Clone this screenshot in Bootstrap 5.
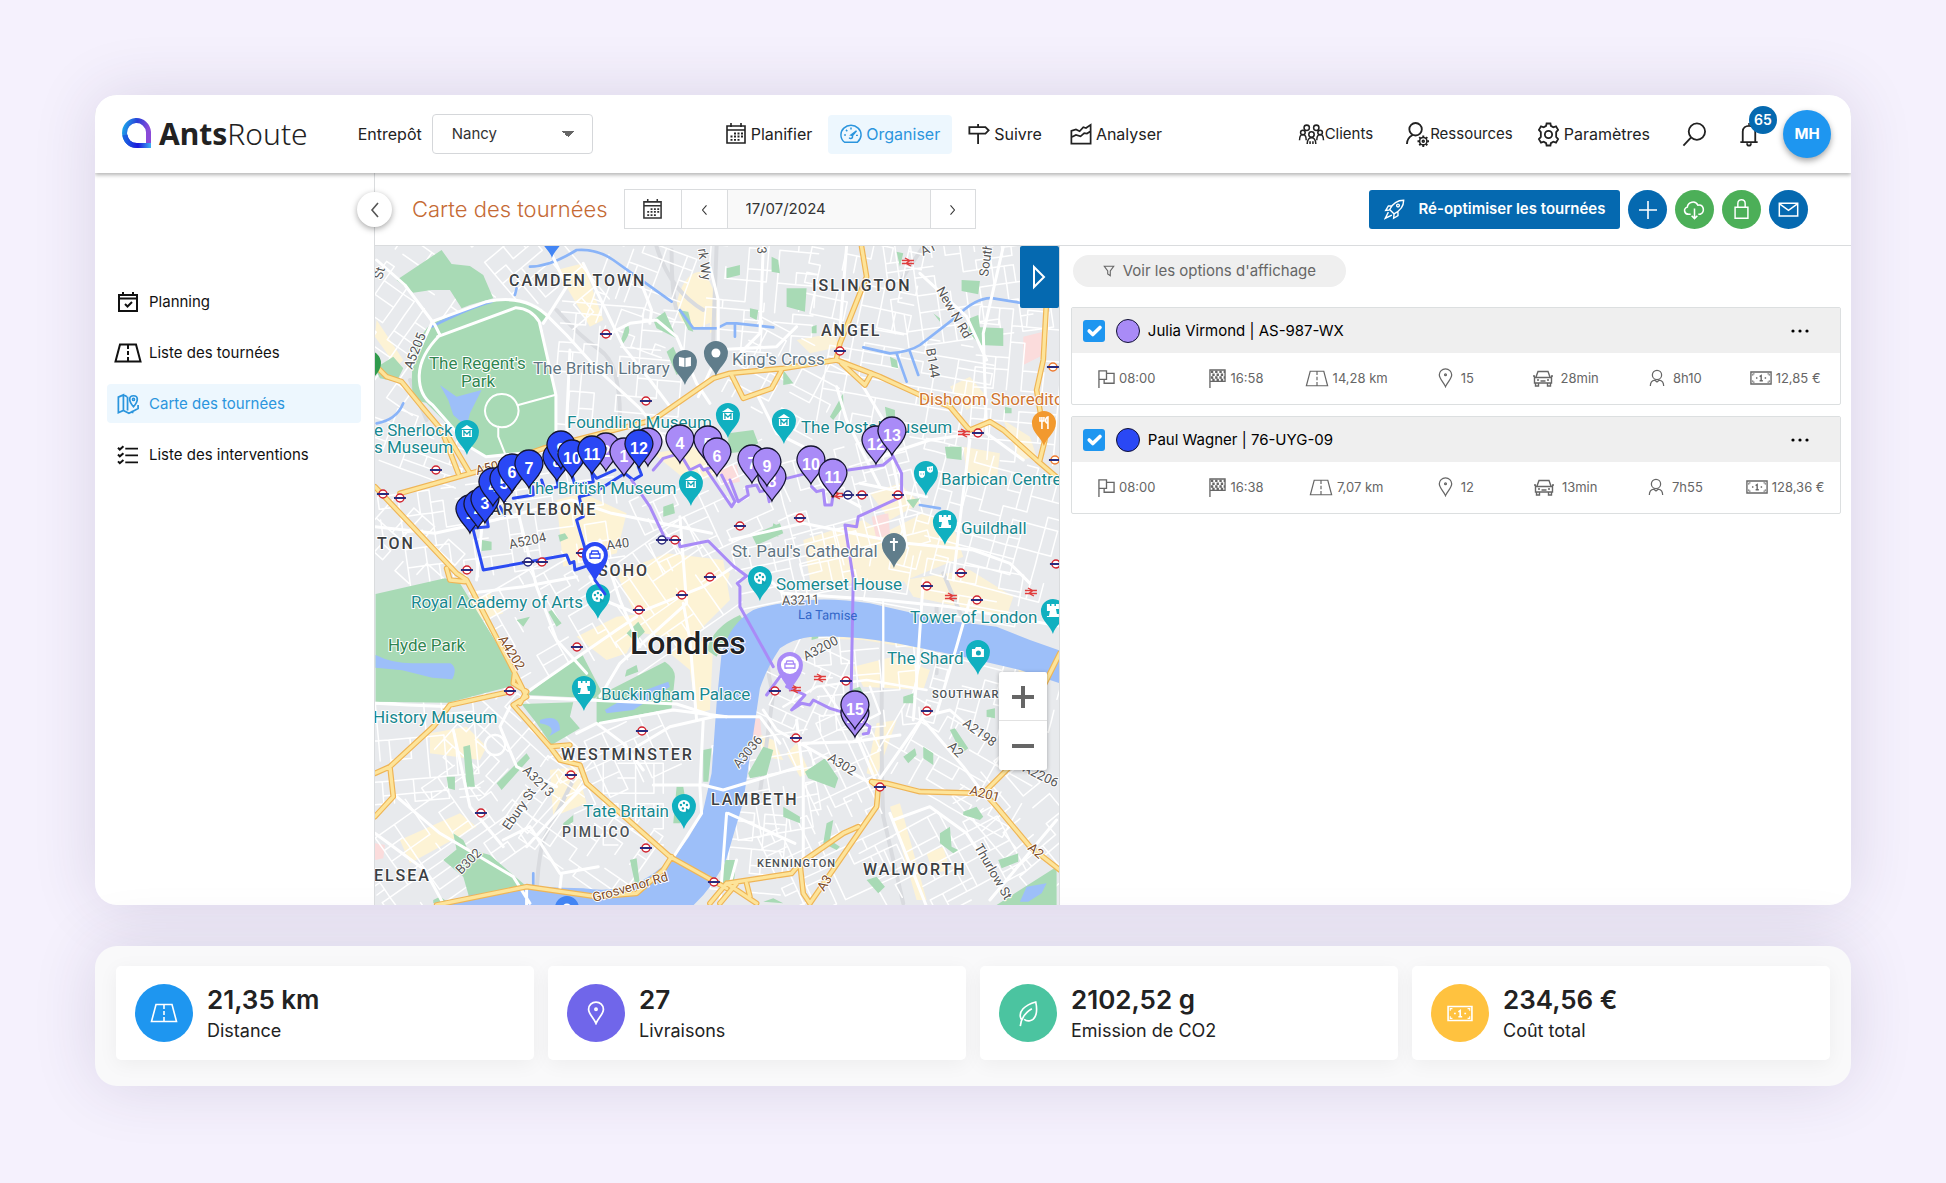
<!DOCTYPE html>
<html lang="fr">
<head>
<meta charset="utf-8">
<meta name="viewport" content="width=device-width, initial-scale=1">
<title>AntsRoute – Carte des tournées</title>
<link href="https://cdn.jsdelivr.net/npm/bootstrap@5.3.0/dist/css/bootstrap.min.css" rel="stylesheet">
<style>
:root{--blue:#0569b0;--sky:#1e96f0;--line:#dadcde}
body{background:#f5f1fd;font-family:Inter,"Open Sans",sans-serif;font-size:15px;line-height:20px;color:#222;padding:95px}
svg.ic{fill:none;stroke:currentColor;stroke-width:1.6;flex:none}
.app-window{background:#fff;border-radius:22px;overflow:hidden}
.app-shell{border-radius:22px;box-shadow:0 0 64px rgba(60,45,90,.14)}
.topbar{height:78px;padding:0 20px 0 27px;box-shadow:0 2px 4px rgba(0,0,0,.3);position:relative;z-index:3;background:#fff}
.brand{font-family:"Noto Sans","Open Sans",sans-serif;font-size:30px;line-height:36px;color:#222;font-weight:300}
.brand b{font-weight:700}
.depot{margin-left:50px;font-size:16px;gap:10px}
.depot select{width:161px;height:40px;border-color:#d5d7da;font-size:15px;padding-left:19px;border-radius:4px;color:#333;
 background-image:linear-gradient(45deg,transparent 50%,#666 50%),linear-gradient(-45deg,transparent 50%,#666 50%);background-size:6px 6px,6px 6px;background-position:right 24px center,right 18px center}
.mainnav{margin-left:120px;font-size:16px}
.mainnav .nav-link{padding:0 12px;height:39px;color:#222;border-radius:4px}
.mainnav .nav-link.on,.side .on{background:#edf7fe;color:#2b95dd}
.tools a{color:#222;text-decoration:none}
.count{position:absolute;left:10px;top:-16px;width:28px;height:28px;background:var(--blue);font-weight:600;font-size:14px}
.avatar{width:48px;height:48px;background:var(--sky);font-weight:700;font-size:15px;box-shadow:0 3px 6px rgba(0,0,0,.35)}
.side{flex:0 0 280px;padding:109px 13px 0 12px;border-right:1px solid var(--line)}
.side nav{row-gap:12px}
.side a{height:39px;padding:0 10px;gap:10px;border-radius:4px;color:#111;text-decoration:none}
.side svg{width:22px}
.toggle{position:absolute;left:-18px;top:19px;width:35px;height:35px;background:#fff;box-shadow:0 2px 6px rgba(0,0,0,.35);z-index:4;border:0;color:#555}
.toolbar{height:73px;border-bottom:1px solid var(--line);padding:0 43px 0 37px}
.toolbar h1{font-size:22px;line-height:28px;color:#c56a35;font-weight:300}
.dates{height:40px}
.dates button{width:46px;background:#fff;border:1px solid var(--line);color:#333;padding:0}
.dates button:first-child{width:58px}
.dates input{width:202px;border:1px solid var(--line);border-width:1px 0;background:#f9f9f9;padding:0 18px;font-size:15px;border-radius:0;color:#333}
.reopt{height:39px;width:251px;background:var(--blue);color:#fff;font-weight:600;font-size:15px;border-radius:3px;border:0;padding:0;gap:14px}
.round{width:39px;height:39px;border:0;color:#fff;padding:0}
.bg-deep{background:var(--blue)}.bg-leaf{background:#4caf58}
.mapbox{flex:0 0 46.4%;min-height:659px;position:relative;overflow:hidden;background:#e8eaed;border-right:1px solid var(--line)}
.mapbox>svg{position:absolute;inset:0;width:100%;height:100%}
.expand{position:absolute;right:0;top:0;width:39px;height:62px;background:var(--blue);color:#fff;border:0;border-radius:2px;padding:0}
.zoomer{position:absolute;right:12px;bottom:135px;width:48px;background:#fff;box-shadow:0 1px 4px rgba(0,0,0,.3);border-radius:2px}
.zoomer button{height:49px;border:0;background:none;color:#666;padding:0}
.zoomer button+button{box-shadow:0 -1px 0 #e2e2e2}
.filter{height:32px;width:273px;background:#efefef;border:0;color:#666;font-size:15px;margin:9px 0 20px 2px}
.panel{padding:0 10px 0 11px}
.tour{border:1px solid #dcdfe0;height:98px;margin-bottom:11px;border-radius:2px}
.tour-head{background:#efefef;height:45px;padding:0 24px 0 11px;color:#000}
.tour-head .form-check-input{width:22px;height:22px;margin:0 11px 0 0;border-radius:3px;border:0;float:none}
.tour-head .form-check-input:checked{background-color:var(--sky);background-size:24px}
.dot{width:24px;height:24px;border:1px solid #113}
.lilac{background:#a98bf7}.royal{background:#2a48f5}
.figures{color:#666;font-size:13px;height:50px}
.figures svg{stroke-width:1.4}
.more{border:0;background:none;padding:0;color:#000}
.totals{margin-top:41px;column-gap:14px;background:#f9f9fa;border-radius:22px;padding:20px 21px 26px;box-shadow:0 0 64px rgba(60,45,90,.14)}
.totals .tile{background:#fff;height:94px;border-radius:5px;padding:0 19px;box-shadow:0 4px 20px rgba(0,0,0,.05);gap:14px}
.disc{width:58px;height:58px;color:#fff}
.sky{background:#1e96f0}.violet{background:#7066ea}.mint{background:#4bc4a0}.amber{background:#ffc23f}
.tile>div{padding-top:4px}
.tile b{font-size:26px;line-height:32px;font-weight:600}
.tile span.what{font-size:18px;line-height:30px}
/* map lettering */
.lb{font-family:Roboto,sans-serif;paint-order:stroke;stroke:#fff;stroke-width:2px;stroke-linejoin:round;font-size:17px}
.t-poi{fill:#17888f}.t-park{fill:#2f8550}.t-grey{fill:#5f7583}.t-food{fill:#cf7430}
.t-area{fill:#3c4043;font-weight:500;font-size:16px;letter-spacing:2px}
.t-small{fill:#4c5155;font-weight:500;font-size:11px;letter-spacing:1px}
.t-mid{fill:#4c5155;font-size:14px;font-weight:500;letter-spacing:2px}
.t-road{fill:#555;font-size:13px}.t-main{fill:#7d4a24;font-size:13px}
.t-water{fill:#3367c8;font-size:13px;stroke:none}
.t-city{fill:#202124;font-size:32px;font-weight:500}
.num{font-family:"Liberation Sans",sans-serif;font-weight:700;font-size:16px;fill:#fff;text-anchor:middle}
</style>
</head>
<body>
<svg width="0" height="0" class="position-absolute" aria-hidden="true">
 <symbol id="cal" viewBox="0 0 22 22"><path d="M2 3h18v17H2zM2 7h18M6 0v4M16 0v4"/><path stroke-dasharray="2 1.500" d="M9 10.500h9M5.500 13.500h12.500M5.500 16.800h9" stroke-width="1.800"/></symbol>
 <symbol id="calcheck" viewBox="0 0 22 22"><path d="M2 4h18v16H2zM2 7.500h18M6 1v4M16 1v4M8 13l2.500 2.500L15 11" stroke-width="2"/></symbol>
 <symbol id="road" viewBox="0 0 28 20"><path d="M6 1.500h16l4.500 17h-25zM14 2v4M14 8v4M14 14v4"/></symbol>
 <symbol id="gauge" viewBox="0 0 24 24"><path d="M5 21C1 18 1 14 1 13a11 10.500 0 0 1 22 0c0 4-2 6-4 8zM10 16a2 2 0 1 0 2-3l6-4.500-5 6"/><path d="M4.500 13h2M6.500 7.500l1.500 1.500M12 5v2M17.500 13.500h2"/></symbol>
 <symbol id="sign" viewBox="0 0 24 24"><path d="M1.500 4.500H19l3.500 3.500L19 11.500H1.500zM11 1v3.500M11 11.500V23" stroke-width="2"/></symbol>
 <symbol id="chart" viewBox="0 0 24 24"><path d="M1.500 8l5-1.500 4 2 4-4.500 3 1L22.500 1.500v20.500h-21zM1.500 15l5-2.500 5 1.500 4-3.500 3 .5 4-2.500" stroke-width="1.900"/></symbol>
 <symbol id="group" viewBox="0 0 28 24"><circle cx="9" cy="5" r="2.800"/><circle cx="19" cy="5" r="2.800"/><circle cx="5" cy="10" r="2.400"/><circle cx="23" cy="10" r="2.400"/><circle cx="14" cy="12" r="2.800"/><path d="M1.500 18c0-8 7-8 7 0M19.500 18c0-8 7-8 7 0M9.500 22c0-9 9-9 9 0M12.500 22v-3M15.500 22v-3"/></symbol>
 <symbol id="usergear" viewBox="0 0 26 28"><circle cx="11" cy="8.500" r="6.500" stroke-width="1.900"/><path d="M2 24c0-6 3-8 6-9.500" stroke-width="1.900"/><circle cx="19" cy="21" r="3.800"/><circle cx="19" cy="21" r="1"/><path d="M19 15v2M19 25v2M13 21h2M23 21h2M14.800 16.800l1.500 1.500M21.700 23.700l1.500 1.500M23.200 16.800l-1.500 1.500M16.300 23.700l-1.500 1.500" stroke-width="2"/></symbol>
 <symbol id="gear" viewBox="0 0 24 26"><path d="M9.500 4L10 1.500h4L14.500 4l2.500 1.500L19.800 4.500l2.200 3.700L20 10.500v5l2 2.300-2.200 3.700L17 20.500 14.500 22l-.5 2.500h-4L9.500 22 7 20.500l-2.800 1L2 17.800l2-2.300v-5L2 8.200l2.200-3.700L7 5.500z" stroke-width="1.900"/><circle cx="12" cy="13" r="3.800" stroke-width="1.900"/></symbol>
 <symbol id="lens" viewBox="0 0 26 26"><circle cx="15.500" cy="10" r="8.500" stroke-width="1.900"/><path d="M9.500 16L1.500 24.500" stroke-width="1.900"/></symbol>
 <symbol id="bell" viewBox="0 0 20 26"><path d="M1 21h18M3.500 21V10c0-8 13-8 13 0v11M8 22c0 3.500 4 3.500 4 0" stroke-width="1.900"/><path d="M10 1v2"/></symbol>
 <symbol id="mapic" viewBox="0 0 24 24"><path d="M1.500 4.500L7 2v17l-5.500 2.500zM7 2l4 2M7 19l6 3 6-3 4-2v-4M11.500 4v15M18 15c-6-7-5-12 0-12s6 5 0 12zM17 19v3" stroke-width="1.900"/><circle cx="18" cy="7" r="1.200"/></symbol>
 <symbol id="checks" viewBox="0 0 24 22"><path d="M9 4h14M9 11.500h14M9 19h14" stroke-width="1.900"/><path d="M1 3l2 2 4-3.500M1 10.500l2 2L7 9M1 18l2 2 4-3.500" stroke-width="2.200"/></symbol>
 <symbol id="pinic" viewBox="0 0 16 22"><path d="M8 20.500C6 15.500 1.200 12 1.200 7.500a6.800 6.500 0 0 1 13.600 0C14.800 12 10 15.500 8 20.500z"/><circle cx="8" cy="7.500" r="1"/></symbol>
 <symbol id="flag" viewBox="0 0 18 20"><path d="M1 20V2h8v9H1M9 4.500h8V15H6.500v-4"/></symbol>
 <symbol id="finish" viewBox="0 0 18 20"><path d="M1 20V1h16v12H1"/><path d="M2 3h15M3.500 6H17M2 9h15M3.500 11.500H17" stroke-dasharray="2.500 2" stroke-width="2.600"/></symbol>
 <symbol id="car" viewBox="0 0 20 17"><path d="M3 7l2-5.500h10L17 7M1.500 7.500h17V13h-17zM2.500 13v3h3v-3M14.500 13v3h3v-3M0 6h2M18 6h2M4 10h2M14 10h2M7.500 11h5"/></symbol>
 <symbol id="man" viewBox="0 0 18 20"><circle cx="9" cy="6.500" r="5.200"/><path d="M1.500 19c0-4 2-6 5-6.500l2.500 2 2.500-2c3 .5 5 2.500 5 6.500"/></symbol>
 <symbol id="note" viewBox="0 0 24 15"><path d="M1 1h22v13H1z" stroke-width="1.500"/><path d="M3 5V3h2M19 3h2v2M21 10v2h-2M5 12H3v-2" stroke-width="1"/><path d="M10.500 6L12.200 4.800V10.500M10.500 10.500h3.500" stroke-width="1.500"/><path d="M6.500 7.500h1.600M16 7.500h1.600" stroke-width="1.600"/></symbol>
 <symbol id="leaf" viewBox="0 0 22 28"><path d="M4 20C0 12 8 5 19 2c2 9 1 18-6 19.500-3 .6-5-.5-6-1.500M3 27C4 19 8 13 15 9" stroke-width="1.700"/></symbol>
 <symbol id="rocket" viewBox="0 0 24 24"><path d="M22.500 1.500C16 1.500 10 5 6.500 12l5 5C18.500 13.500 22.500 8 22.500 1.500zM9 8H5l-3 5 4-.5M16 15v4l-5 3 .5-4.500M5 15l-3.500 7L9 18.500"/><circle cx="16" cy="7.500" r="1.600"/></symbol>
 <symbol id="cloud" viewBox="0 0 24 24"><path d="M8 17H6C1 17 0 11 4.500 9.500 5 4 13 2 15.500 7.500c6-1.500 8 7 2.500 9.500h-2M12 11v10M9 18.500l3 3 3-3"/></symbol>
 <symbol id="lock" viewBox="0 0 18 24"><path d="M2 10h14v12H2zM5 10V6c0-5.500 8-5.500 8 0v4"/></symbol>
 <symbol id="mail" viewBox="0 0 22 16"><path d="M1.200 1.200h19.600v13.600H1.200zM1.500 2l9.500 7 9.500-7"/></symbol>
 <symbol id="funnel" viewBox="0 0 14 14"><path d="M1.500 1.500h11L8.500 7v5.500l-3-2V7z" stroke-width="1.300"/></symbol>
 <symbol id="left" viewBox="0 0 10 18"><path d="M8 2L2 9l6 7"/></symbol>
 <symbol id="right" viewBox="0 0 10 18"><path d="M2 2l6 7-6 7"/></symbol>
</svg>

<main>
<div class="app-shell"><div class="app-window">
 <header class="topbar d-flex align-items-center">
  <div class="d-flex align-items-center brand">
   <svg width="29" height="34" viewBox="0 0 29 34" class="me-2"><defs><linearGradient id="lg" x1="0" y1="0" x2="1" y2=".3"><stop offset="0" stop-color="#1ba7ea"/><stop offset=".5" stop-color="#2b3fd8"/><stop offset="1" stop-color="#8a4ad8"/></linearGradient><linearGradient id="lg2" x1="0" x2="1"><stop offset="0" stop-color="#1b62e0"/><stop offset=".5" stop-color="#1c17dc"/><stop offset="1" stop-color="#3fb0f4"/></linearGradient></defs><path d="M26.500 28.500V15A12 12.500 0 1 0 15 28.500" fill="none" stroke="url(#lg)" stroke-width="5"/><path d="M3 18c1 7 6 10.500 12 10.500h14" fill="none" stroke="url(#lg2)" stroke-width="5"/></svg>
   <span><b>Ants</b>Route</span>
  </div>
  <div class="depot d-flex align-items-center"><label for="depot">Entrepôt</label>
   <select id="depot" class="form-select"><option>Nancy</option></select></div>
  <nav class="mainnav nav flex-nowrap gap-1">
   <a class="nav-link d-flex align-items-center gap-1" href="#"><svg class="ic" width="22" height="22"><use href="#cal"/></svg>Planifier</a>
   <a class="nav-link on d-flex align-items-center gap-1" href="#"><svg class="ic" width="22" height="22"><use href="#gauge"/></svg>Organiser</a>
   <a class="nav-link d-flex align-items-center gap-1" href="#"><svg class="ic" width="22" height="22"><use href="#sign"/></svg>Suivre</a>
   <a class="nav-link d-flex align-items-center gap-1" href="#"><svg class="ic" width="22" height="23"><use href="#chart"/></svg>Analyser</a>
  </nav>
  <div class="tools d-flex align-items-center ms-auto">
   <a class="d-flex align-items-center me-4" href="#"><svg class="ic" width="27" height="23"><use href="#group"/></svg>Clients</a>
   <a class="d-flex align-items-center ms-2 me-4" href="#"><svg class="ic" width="25" height="27"><use href="#usergear"/></svg>Ressources</a>
   <a class="d-flex align-items-center gap-1 me-4" href="#"><svg class="ic" width="23" height="25"><use href="#gear"/></svg><span class="fs-6">Paramètres</span></a>
   <a class="ms-2 me-4" href="#" aria-label="Rechercher"><svg class="ic" width="25" height="25"><use href="#lens"/></svg></a>
   <a class="position-relative ms-2 me-4" href="#" aria-label="Notifications"><svg class="ic" width="20" height="25"><use href="#bell"/></svg><span class="count rounded-circle text-white d-flex align-items-center justify-content-center">65</span></a>
   <span class="avatar rounded-circle text-white d-flex align-items-center justify-content-center">MH</span>
  </div>
 </header>

 <div class="d-flex">
  <aside class="side">
   <nav class="d-grid">
    <a class="d-flex align-items-center" href="#"><svg class="ic" height="22"><use href="#calcheck"/></svg>Planning</a>
    <a class="d-flex align-items-center" href="#"><svg class="ic overflow-visible" height="20" viewBox="3 0 22 20"><use href="#road" width="28" height="20" stroke-width="2"/></svg>Liste des tournées</a>
    <a class="on d-flex align-items-center" href="#"><svg class="ic" height="22"><use href="#mapic"/></svg>Carte des tournées</a>
    <a class="d-flex align-items-center" href="#"><svg class="ic" height="20"><use href="#checks"/></svg>Liste des interventions</a>
   </nav>
  </aside>

  <div class="flex-grow-1 position-relative">
   <button class="toggle rounded-circle d-flex align-items-center justify-content-center" aria-label="Replier"><svg class="ic" width="10" height="18"><use href="#left"/></svg></button>
   <div class="toolbar d-flex align-items-center">
    <h1 class="mb-0">Carte des tournées</h1>
    <div class="dates d-flex ms-3">
     <button aria-label="Calendrier"><svg class="ic" width="21" height="21"><use href="#cal"/></svg></button>
     <button class="border-start-0" aria-label="Jour précédent"><svg class="ic" width="7" height="12"><use href="#left"/></svg></button>
     <input type="text" value="17/07/2024" aria-label="Date">
     <button aria-label="Jour suivant"><svg class="ic" width="7" height="12"><use href="#right"/></svg></button>
    </div>
    <div class="d-flex gap-2 ms-auto">
     <button class="reopt d-flex align-items-center justify-content-center"><svg class="ic" width="21" height="21"><use href="#rocket"/></svg>Ré-optimiser les tournées</button>
     <button class="round bg-deep rounded-circle" aria-label="Ajouter"><svg class="ic" width="18" height="18" viewBox="0 0 18 18"><path d="M9 0v18M0 9h18"/></svg></button>
     <button class="round bg-leaf rounded-circle" aria-label="Télécharger"><svg class="ic" width="23" height="23"><use href="#cloud"/></svg></button>
     <button class="round bg-leaf rounded-circle" aria-label="Verrouiller"><svg class="ic" width="17" height="22"><use href="#lock"/></svg></button>
     <button class="round bg-deep rounded-circle" aria-label="Envoyer"><svg class="ic" width="21" height="15"><use href="#mail"/></svg></button>
    </div>
   </div>
   <div class="d-flex">
    <div class="mapbox">
     <svg viewBox="0 0 684 659" preserveAspectRatio="xMidYMid slice" role="img" aria-label="Carte de Londres">
      <g transform="translate(-5 -6) scale(.333333)" fill="none" stroke-linejoin="round" stroke-linecap="round">
       <g fill="#fdf3d5">
        <path d="M920 190Q940 100 990 95 1040 120 1040 240L975 268Q925 260 920 190zM560 90l80-20 60 170-40 20zM20 240l80 120-20 20-65-90zM1020 170l20 10-5 90-15 10zM560 780l80-20 130 60-30 120-160 40zM740 1000l150-60 170 20 20 120-120 120-140-20zM850 640l120-20 90 80-100 30zM1020 960l60 40-20 70-60-10z"/>
        <path d="M1280 300l110-20 20 40-90 20zM1300 900l180-60 60 40 120-60 90 40 30 90-220 90-240-20zM1500 760l90-30 60 60-90 50zM1600 1020l200-30 130 80-20 60-280-60zM1740 440l60-30 50 60-60 40zM1900 540l80 50 20 60-50 10zM1780 620l110 20-10 90-90-30zM1180 1130l120-20 200 30 190 40-30 50-180-30-280-10z" opacity=".9"/>
        <path d="M180 1480l110-20 60 60-20 40-150-20zM540 1590l80-10 30 110-100 40zM90 1800l180-80 50 40-200 110zM240 1100l120-40 40 60-100 30zM620 1190l120-60 90-10-60 120-60 20zM900 1240l70-40 60 10-10 200-40 10-20-130zM1250 1540l30-30 40 90-30 10zM1520 1450l60-10-60 170-30-10zM1560 1700l30-10 80 290h-30zM1450 1280l120-30 110 40-20 60-180-10zM1670 1840l50-20 20 70-50 10zM1060 1200l70-60 40 20-50 90zM1160 1480l50 20 30 60-60-10zM1880 1180l80 20-10 40-70-10zM1930 1240l40 10 30 80-40 10z"/>
       </g>
       <g fill="#fbdcdc"><path d="M1960 290l60-15v70l-60 30zM1505 830l50-10 5 60-40 20zM1105 1440l65-5 5 50-70 40zM15 1810l30 5-5 40-25 5zM1050 680l50-5 10 50-50 10z"/></g>
       <path d="M860 20q40 130 140 190M905 30q0 130 15 180M1040 20q-10 250-10 290M560 210q70 80 130 120t60 200M120 420l50 120M500 1990q0-110 20-190l60-120 30-60M1540 1090q-10 400 0 640l60 260M1230 1120q-60 120-20 240l-40 300M1700 1100q0 160 0 200M1660 20l-60 90M1720 1000l60 140 200 100" stroke="#d9dbdf" stroke-width="12"/>
       <path id="streets" stroke="#fff" stroke-width="4.500"/>
       <g fill="#a8dab5">
        <path d="M80 120L215 30l30 42 55 6 40 27 30 70-70 20-25 10-35-55h-55l-55 8z"/>
        <path d="M130 480q-20-160 55-230l165-65q120-25 185 40l-20 20-310 50q-90 130-30 195z"/>
        <path d="M205 290l235-87q45 5 70 42l50 220v165l-140 12-70 8-50-30-60-60-80-80q-20-80 0-120z"/>
        <path d="M15 385l55-35 30 35-20 40-50-10zM17 1062l208-47 45 15 160 260-5 48-190 50-218-3z"/>
        <path d="M470 1365l165-125 60 115-20 20zM455 1392l155-5-10 43 30 35-85 50-45-65zM680 1370l205-105q30 20 30 45l-10 95-225 45zM770 1180l35-35 20 30-30 30zM770 1290l30-15 5 20-40 15zM1000 1530l25-5-10 100h-15z"/>
        <path d="M220 1860l50-40 90 25 105 90-165 45-20-70zM250 1780l30 20 10 20-30 10zM280 1520l20-5 15 125h-25zM230 1610h25v40l-20-5zM380 1630l90-90 10 15-85 95zM580 1750l30-25v20l-30 20zM780 1860l20-5 10 80-15-5zM190 1980l20-10 30 20h-50zM920 1640h20l10 60-20 50h-20z"/>
        <path d="M850 240l35-25 35 80-60-30zM890 335l20-15 30 70-20 15zM750 310l20-60q20 20-10 60zM925 210l30 5 15 60-15-5zM545 1110l30 40-15 10-25-45zM335 900l30 5v25l-30 3zM440 1140l40-10-20 30zM565 885l20-5 10 15-25 10zM880 800l30-10 5 30-35 10z"/>
        <path d="M1250 145h60l-5 70-55-15zM1070 85l40-10v30l-40 10zM1205 50l20 10 5 40-25-5zM1775 120l55 3-5 40-50-10zM1800 235l25-10 5 37 70 3v53l-70-3-35-40zM1075 580l75-10 15 40-45 25-45 5zM1145 885l85-35 10 30-80 35zM1210 850l20 10-5 30-20-10zM1380 530l40-70v40l-30 40zM1545 500l30 10v30l-25-5zM1725 620h50v40l-45-5zM1560 350l20 10 5 25-20-5zM1690 220l20 15v10zM1140 205l25 5-5 30-20-10zM1325 260l15-5v25h-15zM1580 35l20 5-10 40zM1610 780l40-5-20 30zM1905 500l20 5v15h-20zM1240 390l30 40-30 5z"/>
        <path d="M1305 1595l60-40 40 60-10 30-80-30zM1135 1600l45-80 30 10-20 75-50 10zM1010 1230q20-70 100-105l10 15q-60 60-80 110zM1140 1300l30 20-10 30-30-20zM1325 1170l20-5v30l-20 5zM1600 1550l35-25 5 20-25 25zM1660 1520l30 20v35l-30-20zM1740 1470l15-5 40 60-20 15zM1600 1370l30-10v30h-30zM1110 1440h25v25h-25zM1240 1700l50 30v20l-50-20zM1370 1750l20-10-10 60 30 20-10 10-40-20zM1710 1780l30-20 5 60 20 10-15 10-40-30zM1780 1715l40-15 20 30-10 10-50-15zM1885 1860l60-20v25l-50 20zM1490 1920l30-10 25 30-20 20zM1880 1995l180-115v115zM1065 1860h30v40l-5 40-40-5zM1440 1350l30-10 10 20-30 15zM1850 1410l25-5v30l-25-5zM1180 1985l30-10 30 15z"/>
       </g>
       <g fill="#9dbff9">
        <path d="M210 435l50 35 75-20-35 70-10 40-40-35-15-45zM17 1245q50 25 110 25h115q22 15 5 48l-60-5-90-22-80-8zM510 1440q60-20 60 30l-35 20q30-30-25-40zM705 1410q60-40 190-85l5 15-110 70-80 10zM1950 1985l20-45 60-10-15 30-40 25z"/>
        <path d="M2080 1235l-100-35-100-40-160-20-220-50q-130-20-230-5-80 10-120 25-70 40-95 130l-15 150-15 210-25 110q-40 90-90 140-60 60-130 90-70 15-140 5l-170-5-170 25-90 40h750q70-60 110-150l50-170 25-170 25-170q20-60 60-120 40-30 100-35 120-5 250 20l200 40 170 40 180 60z"/>
       </g>
       <g stroke="#8ab4f8" stroke-width="8"><path d="M480 80q60 0 140-50 60-5 110 30l70 50 105 75M435 165l5-20M185 260q120-60 180-75M930 210l40 55 70 0 30-15h30l110 12M1480 322l80 18q60-5 90-25l110-85q60-60 110-55l120 20M1580 340l30 85M1620 335l25 70M1095 250v40M20 550q60-10 80-60M490 1900v40M1650 795l60 10"/></g>
       <g stroke="#fff" stroke-width="9">
        <path d="M20 60l85 75 90 120 15 30q-60 60-62 120-2 60 40 90l110 125 50 30 210-20v-165l-50-220q-25-40-70-42l-235 87M185 245l165-60q120-25 190 50l50 50 90 100 130 120 80 100M520 250l70-110-50-110M600 330l-10 220 10 140M125 380l60-130M640 70l120 250 80 100 60 80M720 280l60-30 80-10 60 50 60 140 40 60M810 120l35 90-5 40M1020 80l25 100v160l-60 130M1180 20l-10 260-60 60M1430 20l-20 250M1030 330l190-10 60-60M1650 100l140 130 60 130M1900 20l-60 260 10 300 110 80M1480 440l60 100 40 180 30 200M1500 660l180-60 140-20M1800 600l-30 240-20 180M1160 460l60 120 80 40 60 120 110 60M1080 900l220-50 200 40 110 20 200 20 110 40 60 60M1400 440l30 100 100 200"/>
        <path d="M395 462a50 50 0 1 0 1 0M445 495l110-30M385 560v30l20 50" stroke-width="6"/>
        <path d="M15 860l180 20 180-40 230-60 120 40 300 60M340 820l-20 200M440 800l60 240 60 160 90 100M690 900l60 180 60 140M930 830l20 260-200 180-60 100M300 1060l160-20 160-30M660 1010l40 70 100 40 200-80 90-60M940 1090l20 110 20 240M480 1350l260-180 60-40M470 1372l450 20 110 35M690 1450l220-40 160 20M1180 1000l60 60 300 20 200 20 340 60M1470 730l200 40"/>
        <path d="M620 1480l60-30 80 60 60 80M1030 1430l-130 30-100 60M1000 1440l-10 200 5 80-90 140M15 1390l100 5 130 5M420 1400l-30 60 50 120 120 60M250 1470l50 230 100 120M80 1670l130 110 220 130 50 80M400 1800l80-40 90 140M640 1640l-80 80-90 100M850 1635h150l60 15 230-70M1075 1720l200 90M1300 1510l150-5 140-20M1280 1440l20 170v260M1180 1410l40 60 300 170M1020 1430h150l60 80M1440 1440l80 190M1520 1630l140-200 80-20 100 90M1660 1440l120 140 60 80M1660 1020l-20 300-10 120M1800 1080l-40 140-60 200M1570 1740l110-40 110 80 90 140M1560 1720l110 280M1070 1720l-20 270M15 1780l150 110 60 110M2060 1740l-200 240M1100 1860l-30 110M470 1940v55M570 1945l5-45 110-20"/>
        <path d="M1500 1340l30 80-60 30M1240 1400l100-60 150-20 180 30M1540 1080v260M1360 1340l80 120M375 1485a30 30 0 1 0 1 0" stroke-width="7"/>
       </g>
       <g id="arterials"></g>
       <g stroke="#2b4bf2" stroke-width="9">
        <path d="M310 870l30 120 250-45 10 25 12-5 3 25 30-10M645 925l-25-85 20-10-12-60 42-10 95-60 25 20 25-15-10-25M305 865l50-5-5-30M390 800l15 25v-40M430 775l60-10-2-25M515 720l10 30 40-10-5-25M605 700l10 35 55-10-5-30 15 20 55-25"/>
       </g>
       <g stroke="#a98bf7" stroke-width="9">
        <path d="M785 720l55 80 45 95 40 5 5 20 85-17 75 75 40 30-28 22 8 10 0 60 100 180M1230 1310l-40 55M1250 1340l55 25-40 45 30-20 25 5 10-15 50 25 50 15M1485 1450l15 10-5 20-15 2M1565 640l30 60v70l-130 60-5 30-35-5 25 160-7 375M1570 650l-30 25-105 15M1250 715l60-15M1325 740l15 15 20-5 5 45h20l5-35M1010 690l75 110 10-15-40-80M1080 720l25 65 30-20-5-25 30-5 10 20 20-5 8 35M850 690l30-35 50-15 30 50 30-15 10 15 30-10"/>
       </g>
      </g>
      <g id="overlay"></g>
     </svg>
     <button class="expand" aria-label="Agrandir la carte"><svg class="ic" width="14" height="26" viewBox="0 0 14 26"><path d="M2 3l10 10L2 23z" stroke-width="2"/></svg></button>
     <div class="zoomer d-flex flex-column">
      <button aria-label="Zoom avant"><svg width="22" height="22"><path d="M9 0h4v9h9v4h-9v9H9v-9H0V9h9z" fill="#666"/></svg></button>
      <button aria-label="Zoom arrière"><svg width="22" height="22"><path d="M0 9h22v4H0z" fill="#666"/></svg></button>
     </div>
    </div>

    <section class="panel flex-grow-1">
     <button class="filter rounded-pill d-flex align-items-center justify-content-center gap-2"><svg class="ic" width="12" height="12"><use href="#funnel"/></svg>Voir les options d'affichage</button>
     <article class="tour">
      <div class="tour-head d-flex align-items-center">
       <input class="form-check-input" type="checkbox" id="t1" checked><span class="dot lilac rounded-circle me-2"></span><label for="t1">Julia Virmond | AS-987-WX</label>
       <button class="more ms-auto" aria-label="Plus"><svg width="30" height="8"><circle cx="7" cy="4" r="1.600"/><circle cx="14" cy="4" r="1.600"/><circle cx="21" cy="4" r="1.600"/></svg></button>
      </div>
      <div class="figures row g-0 align-items-center text-nowrap">
       <div class="col d-flex justify-content-center align-items-center gap-1"><svg class="ic" width="17" height="19"><use href="#flag"/></svg>08:00</div>
       <div class="col d-flex justify-content-center align-items-center gap-1"><svg class="ic" width="17" height="19"><use href="#finish"/></svg>16:58</div>
       <div class="col d-flex justify-content-center align-items-center gap-1"><svg class="ic" width="24" height="17"><use href="#road"/></svg>14,28 km</div>
       <div class="col d-flex justify-content-center align-items-center gap-2"><svg class="ic" width="15" height="20"><use href="#pinic"/></svg>15</div>
       <div class="col d-flex justify-content-center align-items-center gap-2"><svg class="ic" width="20" height="17"><use href="#car"/></svg>28min</div>
       <div class="col d-flex justify-content-center align-items-center gap-2"><svg class="ic" width="16" height="18"><use href="#man"/></svg>8h10</div>
       <div class="col d-flex justify-content-center align-items-center gap-1"><svg class="ic" width="22" height="14"><use href="#note"/></svg>12,85 €</div>
      </div>
     </article>
     <article class="tour">
      <div class="tour-head d-flex align-items-center">
       <input class="form-check-input" type="checkbox" id="t2" checked><span class="dot royal rounded-circle me-2"></span><label for="t2">Paul Wagner | 76-UYG-09</label>
       <button class="more ms-auto" aria-label="Plus"><svg width="30" height="8"><circle cx="7" cy="4" r="1.600"/><circle cx="14" cy="4" r="1.600"/><circle cx="21" cy="4" r="1.600"/></svg></button>
      </div>
      <div class="figures row g-0 align-items-center text-nowrap">
       <div class="col d-flex justify-content-center align-items-center gap-1"><svg class="ic" width="17" height="19"><use href="#flag"/></svg>08:00</div>
       <div class="col d-flex justify-content-center align-items-center gap-1"><svg class="ic" width="17" height="19"><use href="#finish"/></svg>16:38</div>
       <div class="col d-flex justify-content-center align-items-center gap-1"><svg class="ic" width="24" height="17"><use href="#road"/></svg>7,07 km</div>
       <div class="col d-flex justify-content-center align-items-center gap-2"><svg class="ic" width="15" height="20"><use href="#pinic"/></svg>12</div>
       <div class="col d-flex justify-content-center align-items-center gap-2"><svg class="ic" width="20" height="17"><use href="#car"/></svg>13min</div>
       <div class="col d-flex justify-content-center align-items-center gap-2"><svg class="ic" width="16" height="18"><use href="#man"/></svg>7h55</div>
       <div class="col d-flex justify-content-center align-items-center gap-1"><svg class="ic" width="22" height="14"><use href="#note"/></svg>128,36 €</div>
      </div>
     </article>
    </section>
   </div>
  </div>
 </div>
</div></div>

<section class="totals d-flex">
 <div class="tile w-100 d-flex align-items-center"><span class="disc sky rounded-circle d-flex align-items-center justify-content-center"><svg class="ic" width="28" height="20"><use href="#road"/></svg></span><div class="d-flex flex-column"><b>21,35 km</b><span class="what">Distance</span></div></div>
 <div class="tile w-100 d-flex align-items-center"><span class="disc violet rounded-circle d-flex align-items-center justify-content-center"><svg class="ic" width="18" height="24"><use href="#pinic"/></svg></span><div class="d-flex flex-column"><b>27</b><span class="what">Livraisons</span></div></div>
 <div class="tile w-100 d-flex align-items-center"><span class="disc mint rounded-circle d-flex align-items-center justify-content-center"><svg class="ic" width="22" height="27"><use href="#leaf"/></svg></span><div class="d-flex flex-column"><b>2102,52 g</b><span class="what">Emission de CO2</span></div></div>
 <div class="tile w-100 d-flex align-items-center"><span class="disc amber rounded-circle d-flex align-items-center justify-content-center"><svg class="ic" width="26" height="17"><use href="#note"/></svg></span><div class="d-flex flex-column"><b>234,56 €</b><span class="what">Coût total</span></div></div>
</section>
</main>

<script src="https://cdn.jsdelivr.net/npm/bootstrap@5.3.0/dist/js/bootstrap.bundle.min.js"></script>
<script>
// Minor streets: irregular grids, one per district [cx, cy, half width, half height, angle]
let seed=7;const rnd=()=>(seed=(seed*16807)%2147483647)/2147483647;
const districts=[[120,260,170,220,35],[480,80,260,120,50],[760,400,200,200,5],[820,170,140,160,20],[1180,180,170,200,5],[1500,120,190,150,12],[1800,150,240,200,-8],[1250,430,160,140,28],[1620,450,260,160,10],[1950,450,140,240,5],[130,640,160,110,20],[400,870,360,150,-8],[130,950,160,110,42],[1050,800,240,130,-25],[1450,800,200,180,-15],[1850,850,240,200,15],[540,1150,170,170,-30],[880,1080,190,170,-35],[1300,980,200,90,-12],[1750,1050,260,80,10],[150,1550,190,170,-5],[430,1550,190,150,42],[200,1820,230,170,-35],[760,1560,200,100,-25],[640,1780,220,130,35],[820,1700,120,130,0],[1250,1330,150,140,25],[1500,1330,160,150,-5],[1850,1380,220,140,15],[1200,1640,150,150,-10],[1430,1550,150,130,-25],[1750,1600,230,140,30],[1150,1850,120,130,5],[1400,1850,190,150,-25],[1750,1860,240,150,-28],[1980,1760,120,220,-40]];
let d='';
for(const [cx,cy,w,h,deg] of districts){
 const a=deg*Math.PI/180,c=Math.cos(a),s=Math.sin(a),xs=[],ys=[];
 for(let x=-w;x<w;x+=28+rnd()*44)xs.push(x);
 for(let y=-h;y<h;y+=24+rnd()*40)ys.push(y);
 const P=(x,y)=>Math.round(cx+x*c-y*s)+' '+Math.round(cy+x*s+y*c);
 xs.forEach((x,i)=>ys.forEach((y,j)=>{
  if(xs[i+1]!==undefined&&rnd()<.62)d+='M'+P(x,y)+'L'+P(xs[i+1],y);
  if(ys[j+1]!==undefined&&rnd()<.62)d+='M'+P(x,y)+'L'+P(x,ys[j+1]);
 }));
}
document.getElementById('streets').setAttribute('d',d);

// Arterial roads, casing first and fill on top
const art='M15 375l35 35 45 15 65 80 55 65 50 130M235 590l65 110M90 760l230-65 200-70 330-85 180-125 50-15 160-15 160-25 130 50 120 55 90 35 50 60 10 10 60-25 40 25 100 90 70 60M1475 20l15 90-80 200-10 45M1085 405l35 70 85-30 30-55M1415 370l70 65 20-35M2030 180l-10 180-20 90 25 150-15 60M15 740l85 90 160 170 30 20 140 270 25 50 15 30-40 25 110 125 30 40 60 15 20 55 250 220 170 95M420 1355l-180 40-50 65-130 120-45 20M60 1580l10 90-55 60M230 985l10 35 45 5M435 1290l-5 40 40 25-20 35M540 1520l60-5M200 1995l270-55 210 30 120-10 80-70 25-40M1020 1990l50-60 195-30 25-30 130-90 45-20M1320 1990l200-290 5-60-20-15M1290 1870l10 90 20 30M1070 1930l90 60M1130 1930l10 40M1050 1990l50-60M1505 1625l45 5 100 25 190 5 80-80 60-80M1840 1655l40 45 100 120 90 70M2070 1240l-60 120-40 60';
document.getElementById('arterials').innerHTML=`<path d="${art}" stroke="#efb556" stroke-width="17"/><path d="${art}" stroke="#fde49a" stroke-width="10"/>`;

const out=[],R=v=>Math.round(v/3);
const at=(x,y,body)=>out.push(`<g transform="translate(${R(x)-5} ${R(y)-6})">${body}</g>`);

// Underground and rail stations
const tube=(list,ring)=>list.forEach(([x,y])=>at(x,y,`<circle r="4" fill="#fff" stroke="${ring}" stroke-width="1.500"/><path d="M-6 0H6" stroke="#2a2a7c" stroke-width="2"/>`));
tube([[707,282],[828,483],[197,690],[40,762],[91,775],[292,990],[915,900],[516,966],[636,938],[1020,1011],[1411,334],[1823,578],[1475,766],[1585,765],[1291,833],[1110,858],[2057,973],[1772,998],[935,1065],[808,1110],[620,1220],[420,1353],[817,1474],[603,1605],[332,1719],[827,1825],[1033,1926],[1671,1037],[1820,1081],[1429,1322],[1215,1352],[1671,1414],[1278,1493],[1529,1642]],'#d0222e');
tube([[875,900],[475,966],[1435,766]],'#2a2a7c');
tube([[2050,382],[2055,660]],'#ee7b30');
[[1615,66],[1782,578],[1400,766],[1742,1070],[1983,1055],[1351,1313],[1275,1347]].forEach(([x,y])=>at(x,y,'<path d="M-6-1.500H6M-6 1.500H6M-3-4L2-1.500-2 1.500 3 4" stroke="#e03c3c" stroke-width="1.300" fill="none"/>'));

// Place names: text, x, y, style, angle
[['CAMDEN TOWN',418,137,'area'],['ISLINGTON',1325,152,'area'],['ANGEL',1354,287,'area'],["The Regent's",178,388,'park'],['Park',272,440,'park'],['The British Library',490,402,'grey'],["King's Cross",1087,374,'grey'],['Foundling Museum',592,563,'poi'],['e Sherlock',12,588,'poi'],['s Museum',12,640,'poi'],['The Postal Museum',1293,578,'poi'],['Dishoom Shoreditch',1648,496,'food'],['The British Museum',466,762,'poi'],['Barbican Centre',1714,734,'poi'],['Guildhall',1772,881,'poi'],["St. Paul's Cathedral",1086,952,'grey'],['MARYLEBONE',312,826,'area'],['TON',20,928,'area'],['SOHO',684,1008,'area'],['Royal Academy of Arts',124,1104,'poi'],['Hyde Park',54,1234,'park'],['Somerset House',1217,1050,'poi'],['La Tamise',1284,1138,'water',1],['Tower of London',1620,1150,'poi'],['The Shard',1550,1272,'poi'],['Londres',780,1242,'city'],['Buckingham Palace',692,1380,'poi'],['History Museum',10,1450,'poi'],['WESTMINSTER',574,1561,'area'],['Tate Britain',640,1732,'poi'],['PIMLICO',577,1790,'mid'],['LAMBETH',1024,1696,'area'],['ELSEA',12,1922,'area'],['KENNINGTON',1162,1882,'small'],['WALWORTH',1478,1906,'area'],['SOUTHWARK',1685,1374,'small'],
['A5205',125,390,'road',-68],['A5204',420,926,'road',-12],['A40',712,930,'road',-8],['A501',322,706,'main',-14],['rk Wy',985,28,'road',82],['B144',1668,326,'road',80],['New N Rd',1698,150,'road',60],['South',1855,110,'road',-82],['A1',1660,48,'road',-25],['3',1160,20,'road',85],['A3211',1235,1094,'road',-2],['A3200',1308,1264,'road',-28],['A4202',385,1196,'main',58],['A3213',455,1592,'road',45],['Ebury St',418,1772,'road',-55],['B302',272,1906,'road',-45],['Grosvenor Rd',672,1986,'main',-16],['A3036',1108,1588,'road',-50],['A302',1370,1560,'road',32],['A2198',1775,1454,'road',36],['A2',1730,1522,'road',45],['A2206',1955,1592,'road',26],['A201',1798,1662,'main',15],['A2',1970,1826,'main',40],['A3',1362,1956,'main',-58],['Thurlow St',1812,1822,'road',60],['St',35,120,'road',-75]]
.forEach(([t,x,y,k,r])=>out.push(`<text class="lb t-${k}" transform="translate(${R(x)-5} ${R(y)-6}) rotate(${r||0})">${t}</text>`));

// Landmarks
const glyph={
 museum:'<path d="M-6-3L0-7 6-3zM-5-2h10v7H-5z" fill="#fff"/><path d="M-3 4v-5l3 3 3-3v5" stroke="#12a5b5" fill="none" stroke-width="1.300"/>',
 palette:'<circle r="6" fill="#fff"/><g fill="#12a5b5"><circle cx="-3" cy="-1" r="1.200"/><circle cx="0" cy="-3" r="1.200"/><circle cx="3" cy="-1" r="1.200"/><circle cx="-1" cy="2.500" r="1.200"/><path d="M2 7V2l5 3z"/></g>',
 rook:'<path d="M-6-7h3v2h1.500v-2h3v2H3v-2h3v5H3l1 5h2v3H-6V5h2l1-5h-3z" fill="#fff"/>',
 masks:'<path d="M-7-2h6v4c-1 4-5 4-6 0zM1-6l6-1v5c-2 3-5 2-6-1z" fill="#fff"/><path d="M-5.500 1h1M-3 1h1M3-4h1M5-4h1" stroke="#12a5b5"/>',
 camera:'<path d="M-6-3h3l1-2h5l1 2h2v8H-6z" fill="#fff"/><circle cy="1" cx=".5" r="2.500" fill="#12a5b5"/>',
 cross:'<path d="M0-7V6M-4-3h8" stroke="#fff" stroke-width="2"/>',
 book:'<path d="M-6-5l5.500 1v9L-6 4zM6-5L.5-4v9L6 4z" fill="#fff"/>',
 spot:'<circle r="4.500" fill="#fff"/>',
 fork:'<path d="M-4-6v4h4v-4M-2-6V6M4 6V-6c-3 1-3 6 0 6" stroke="#fff" stroke-width="1.600" fill="none"/>'};
const T='#10b0c0',G='#607d8b';
[[290,577,T,'museum'],[962,728,T,'museum'],[1073,525,T,'museum'],[1242,542,T,'museum'],[1668,698,T,'masks'],[1725,845,T,'rook'],[1572,915,G,'cross'],[945,367,G,'book'],[1038,340,G,'spot'],[2023,550,'#f2992e','fork'],[-2,370,'#2f9a4c','spot'],[685,1068,T,'palette'],[643,1345,T,'rook'],[943,1698,T,'palette'],[1170,1015,T,'palette'],[1823,1237,T,'camera'],[2048,1113,T,'rook'],[590,2005,'#4285f4','spot'],[545,-15,'#4285f4','spot']]
.forEach(([x,y,c,g])=>at(x,y,`<path d="M0 23C-2 15-12 10-12 0A12 12 0 0 1 12 0C12 10 2 15 0 23z" fill="${c}"/>${glyph[g]}`));

// Last leg of the second tour, from the vehicle to the academy
out.push('<path d="M220 334L230 348" stroke="#2b4bf2" stroke-width="3" stroke-linecap="round"/>');

// Numbered stops and vehicles
const drop='M0 23C-3 16-14 9-14-1A14 14 0 0 1 14-1C14 9 3 16 0 23z';
const stop=(n,x,y,c)=>at(x,y-10,`<path d="${drop}" fill="${c}" stroke="#151530" stroke-width="1.300"/><text class="num" y="9">${n}</text>`);
const V='#a98bf7',B='#2a48f5';
[[3,833,620,V],[2,708,635,V],[1,763,648,V],[4,930,610,V],[5,1015,613,V],[6,1041,650,V],[7,1146,670,V],[8,1207,725,V],[9,1191,680,V],[10,1323,672,V],[11,1389,712,V],[12,1517,613,V],[13,1565,585,V],[14,1455,1432,V],[15,1455,1407,V],
[1,300,820,B],[2,325,805,B],[3,345,790,B],[4,368,740,B],[5,402,730,B],[6,425,697,B],[7,477,685,B],[8,560,665,B],[9,572,628,B],[10,605,655,B],[11,665,643,B],[12,807,625,B]].forEach(a=>stop(...a));
[[675,945,B],[1260,1275,V]].forEach(([x,y,c])=>at(x,y,`<path d="M0 27C-3 18-13 11-13 0A13 13 0 0 1 13 0C13 11 3 18 0 27z" fill="${c}"/><circle r="9" fill="#fff"/><path d="M-4-1l1-3h6l1 3M-5-1H5V3H-5zM-4 3v1M4 3v1" fill="none" stroke="${c}" stroke-width="1.300"/>`));
document.getElementById('overlay').innerHTML=out.join('');
</script>
</body>
</html>
